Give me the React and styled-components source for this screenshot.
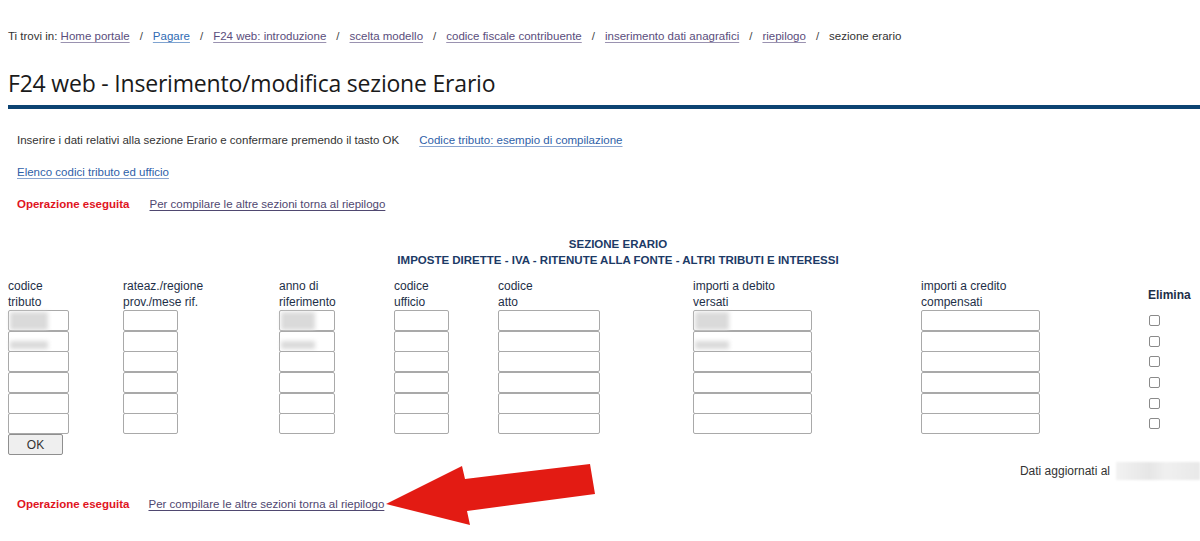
import React from 'react';
import styled, { createGlobalStyle } from 'styled-components';

const GlobalStyle = createGlobalStyle`
  html, body { margin: 0; padding: 0; background: #fff; }
  body {
    font-family: "Liberation Sans", Arial, sans-serif;
    font-size: 11.5px;
    color: #333;
  }
`;

const crumbs = [
  { label: 'Home portale' },
  { label: 'Pagare', fresh: true },
  { label: 'F24 web: introduzione' },
  { label: 'scelta modello' },
  { label: 'codice fiscale contribuente' },
  { label: 'inserimento dati anagrafici' },
  { label: 'riepilogo' },
];

const columns = [
  { top: 'codice', bottom: 'tributo', width: 61, blurred: [38, 38] },
  { top: 'rateaz./regione', bottom: 'prov./mese rif.', width: 55 },
  { top: 'anno di', bottom: 'riferimento', width: 56, blurred: [34, 34] },
  { top: 'codice', bottom: 'ufficio', width: 55 },
  { top: 'codice', bottom: 'atto', width: 102 },
  { top: 'importi a debito', bottom: 'versati', width: 119, blurred: [34, 34] },
  { top: 'importi a credito', bottom: 'compensati', width: 119 },
];

const ROWS = 6;

const Page = styled.div`
  width: 1200px;
  min-height: 541px;
  padding: 25px 0 30px 8px;
  box-sizing: border-box;
`;

const Breadcrumb = styled.nav`
  font-size: 11.5px;
  line-height: 22px;
  color: #333;
  display: flex;
  align-items: center;
`;

const CrumbLink = styled.a`
  color: ${({ $fresh }) => ($fresh ? '#2f6bb3' : '#5a4d7c')};
  text-decoration: underline;
  text-underline-offset: 2px;
  text-decoration-color: ${({ $fresh }) => ($fresh ? '#7fa3d0' : '#9a92b0')};
`;

const Sep = styled.span`
  margin: 0 10px;
  color: #444;
`;

const Title = styled.h1`
  margin: 21px 0 0;
  font-family: "Open Sans", "Liberation Sans", sans-serif;
  font-weight: 500;
  font-size: 23px;
  letter-spacing: -0.2px;
  color: #1a1a1a;
  line-height: 30px;
  padding-bottom: 7px;
  border-bottom: 4px solid #0c4372;
`;

const Para = styled.div`
  margin: ${({ $top }) => $top}px 0 0 9px;
  line-height: 16px;
  display: flex;
  gap: 20px;
  color: #333;
`;

const BlueLink = styled.a`
  color: #2f5fa8;
  text-decoration: underline;
  text-underline-offset: 2px;
  text-decoration-color: #8aa5d0;
`;

const PurpleLink = styled.a`
  color: #4f4770;
  text-decoration: underline;
  text-underline-offset: 2px;
`;

const Alert = styled.span`
  color: #e0141e;
  font-weight: bold;
`;

const SectionHead = styled.div`
  margin-top: 24px;
  text-align: center;
  padding-left: 28px;
  font-weight: bold;
  font-size: 11.5px;
  line-height: 16px;
  color: #1c3a66;
`;

const Grid = styled.div`
  margin-top: 9px;
  display: grid;
  grid-template-columns: 115px 156px 115px 104px 195px 228px 227px 1fr;
  font-size: 12px;
`;

const Column = styled.div`
  display: flex;
  flex-direction: column;
`;

const Label = styled.div`
  color: #1e2f48;
  line-height: 16px;
  height: 33px;
  padding-top: 1px;
  box-sizing: border-box;
`;

const ElimLabel = styled(Label)`
  font-weight: bold;
  display: flex;
  align-items: center;
  padding-top: 2px;
`;

const Cell = styled.div`
  position: relative;
  height: 20.7px;
`;

const Field = styled.input`
  box-sizing: border-box;
  width: ${({ $w }) => $w}px;
  height: 21px;
  border: 1px solid #a9a9a9;
  border-radius: 2px;
  background: #fff;
  margin: 0;
  padding: 0;
`;

const Blur = styled.span`
  position: absolute;
  left: 2px;
  top: ${({ $row }) => ($row === 0 ? 2 : 10)}px;
  width: ${({ $w }) => $w}px;
  height: ${({ $row }) => ($row === 0 ? 18 : 8)}px;
  background: #dadada;
  filter: blur(2px);
`;

const CheckCell = styled.div`
  height: 20.7px;
  display: flex;
  align-items: center;
`;

const Check = styled.span`
  width: 9px;
  height: 9px;
  margin-left: 1px;
  border: 1px solid #8a8a8a;
  border-radius: 2px;
  background: #fff;
`;

const OkButton = styled.button`
  width: 55px;
  height: 21px;
  margin-top: 0;
  border: 1px solid #8f8f8f;
  border-radius: 2px;
  background: #efefef;
  font-family: "Liberation Sans", Arial, sans-serif;
  font-size: 12px;
  color: #333;
  padding: 0;
`;

const UpdatedRow = styled.div`
  margin-top: 7px;
  display: flex;
  justify-content: flex-end;
  align-items: center;
  gap: 6px;
  color: #333;
  font-size: 12px;
  line-height: 18px;
`;

const Redacted = styled.span`
  width: 84px;
  height: 18px;
  background: linear-gradient(90deg, #f2f2f2 0%, #e6e6e6 40%, #f0f0f0 60%, #e8e8e8 100%);
  filter: blur(1px);
`;

const Footer = styled.div`
  position: relative;
  margin: 16px 0 0 9px;
  display: flex;
  gap: 19px;
  line-height: 16px;
`;

const Arrow = styled.svg`
  position: absolute;
  left: 360px;
  top: -34px;
  overflow: visible;
`;

export default function App() {
  return (
    <Page>
      <GlobalStyle />
      <Breadcrumb>
        <span>Ti trovi in:&nbsp;</span>
        {crumbs.map((c) => (
          <React.Fragment key={c.label}>
            <CrumbLink $fresh={c.fresh}>{c.label}</CrumbLink>
            <Sep>/</Sep>
          </React.Fragment>
        ))}
        <span>sezione erario</span>
      </Breadcrumb>

      <Title>F24 web - Inserimento/modifica sezione Erario</Title>

      <Para $top={23}>
        <span>Inserire i dati relativi alla sezione Erario e confermare premendo il tasto OK</span>
        <BlueLink>Codice tributo: esempio di compilazione</BlueLink>
      </Para>
      <Para $top={16}>
        <BlueLink>Elenco codici tributo ed ufficio</BlueLink>
      </Para>
      <Para $top={16}>
        <Alert>Operazione eseguita</Alert>
        <PurpleLink>Per compilare le altre sezioni torna al riepilogo</PurpleLink>
      </Para>

      <SectionHead>
        SEZIONE ERARIO
        <br />
        IMPOSTE DIRETTE - IVA - RITENUTE ALLA FONTE - ALTRI TRIBUTI E INTERESSI
      </SectionHead>

      <Grid>
        {columns.map((col, ci) => (
          <Column key={ci}>
            <Label>
              {col.top}
              <br />
              {col.bottom}
            </Label>
            {Array.from({ length: ROWS }).map((_, r) => (
              <Cell key={r}>
                <Field $w={col.width} />
                {col.blurred && r < 2 && <Blur $row={r} $w={col.blurred[r]} />}
              </Cell>
            ))}
            {ci === 0 && <OkButton>OK</OkButton>}
          </Column>
        ))}
        <Column>
          <ElimLabel>Elimina</ElimLabel>
          {Array.from({ length: ROWS }).map((_, r) => (
            <CheckCell key={r}>
              <Check />
            </CheckCell>
          ))}
        </Column>
      </Grid>

      <UpdatedRow>
        <span>Dati aggiornati al</span>
        <Redacted />
      </UpdatedRow>

      <Footer>
        <Alert>Operazione eseguita</Alert>
        <PurpleLink>Per compilare le altre sezioni torna al riepilogo</PurpleLink>
        <Arrow width="222" height="66" viewBox="377 461 222 66">
          <polygon
            points="386,503 462,465 465,478 590,463 595,493 467,510 470,524"
            fill="#e31b13"
          />
        </Arrow>
      </Footer>
    </Page>
  );
}
